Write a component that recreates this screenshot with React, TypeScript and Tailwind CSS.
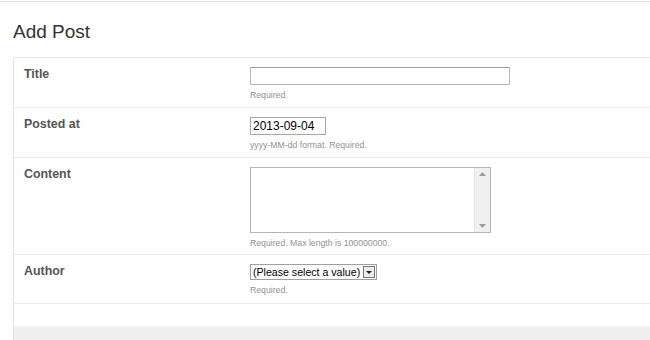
import React from "react";

function Row({ label, children, h }: { label: string; children: React.ReactNode; h: string }) {
  return (
    <div className={`flex border-b border-[#ececec] ${h}`}>
      <div className="w-[236px] shrink-0 pl-[10px] pt-[9px] text-[12.4px] font-bold text-[#555] leading-[14px]">{label}</div>
      <div className="pt-[9px] flex flex-col">{children}</div>
    </div>
  );
}

function Help({ children }: { children: React.ReactNode }) {
  return <div className="mt-[5px] text-[8.7px] leading-[10px] text-[#939393]">{children}</div>;
}

export default function App() {
  return (
    <div className="w-[650px] h-[340px] overflow-hidden bg-white" style={{ fontFamily: '"Liberation Sans", Arial, sans-serif' }}>
      <div className="h-[2px] bg-white border-b border-[#e2e2e2]" />
      <div className="pl-[13px] pt-[18px] h-[55px] text-[19px] leading-[24px] text-[#333]">Add Post</div>
      <div className="ml-[13px] border-l border-t border-[#e4e4e4]">
        <Row label="Title" h="h-[50px]">
          <div className="w-[260px] h-[18px] border border-[#b8b8b8] border-t-[#a0a0a0] bg-white" />
          <Help>Required.</Help>
        </Row>
        <Row label="Posted at" h="h-[50px]">
          <div className="w-[76px] h-[18px] border border-[#a8a8a8] bg-white text-[12px] leading-[16px] text-black pl-[2px]">2013-09-04</div>
          <Help>yyyy-MM-dd format. Required.</Help>
        </Row>
        <Row label="Content" h="h-[97px]">
          <div className="w-[241px] h-[66px] border border-[#b5b5b5] bg-white flex justify-end">
            <div className="w-[16px] h-full bg-[#f0f0f0] border-l border-[#e4e4e4] flex flex-col items-center justify-between py-[4px]">
              <svg width="7" height="4" viewBox="0 0 7 4"><path d="M0 4 L3.5 0 L7 4 Z" fill="#9a9a9a" /></svg>
              <svg width="7" height="4" viewBox="0 0 7 4"><path d="M0 0 L3.5 4 L7 0 Z" fill="#9a9a9a" /></svg>
            </div>
          </div>
          <Help>Required. Max length is 100000000.</Help>
        </Row>
        <Row label="Author" h="h-[49px]">
          <div className="flex items-center w-[127px] h-[16px] border border-[#a0a0a0] bg-white">
            <span className="flex-1 text-[10.6px] leading-[14px] text-black pl-[2px] whitespace-nowrap">(Please select a value)</span>
            <div className="w-[12px] h-[12px] mr-[1px] border border-[#777] bg-[#ececec] flex items-center justify-center">
              <svg width="6" height="3" viewBox="0 0 6 3"><path d="M0 0 L3 3 L6 0 Z" fill="#222" /></svg>
            </div>
          </div>
          <Help>Required.</Help>
        </Row>
        <div className="h-[23px] border-b border-[#f2f2f2]" />
        <div className="h-[40px] bg-[#efefef]" />
      </div>
    </div>
  );
}
